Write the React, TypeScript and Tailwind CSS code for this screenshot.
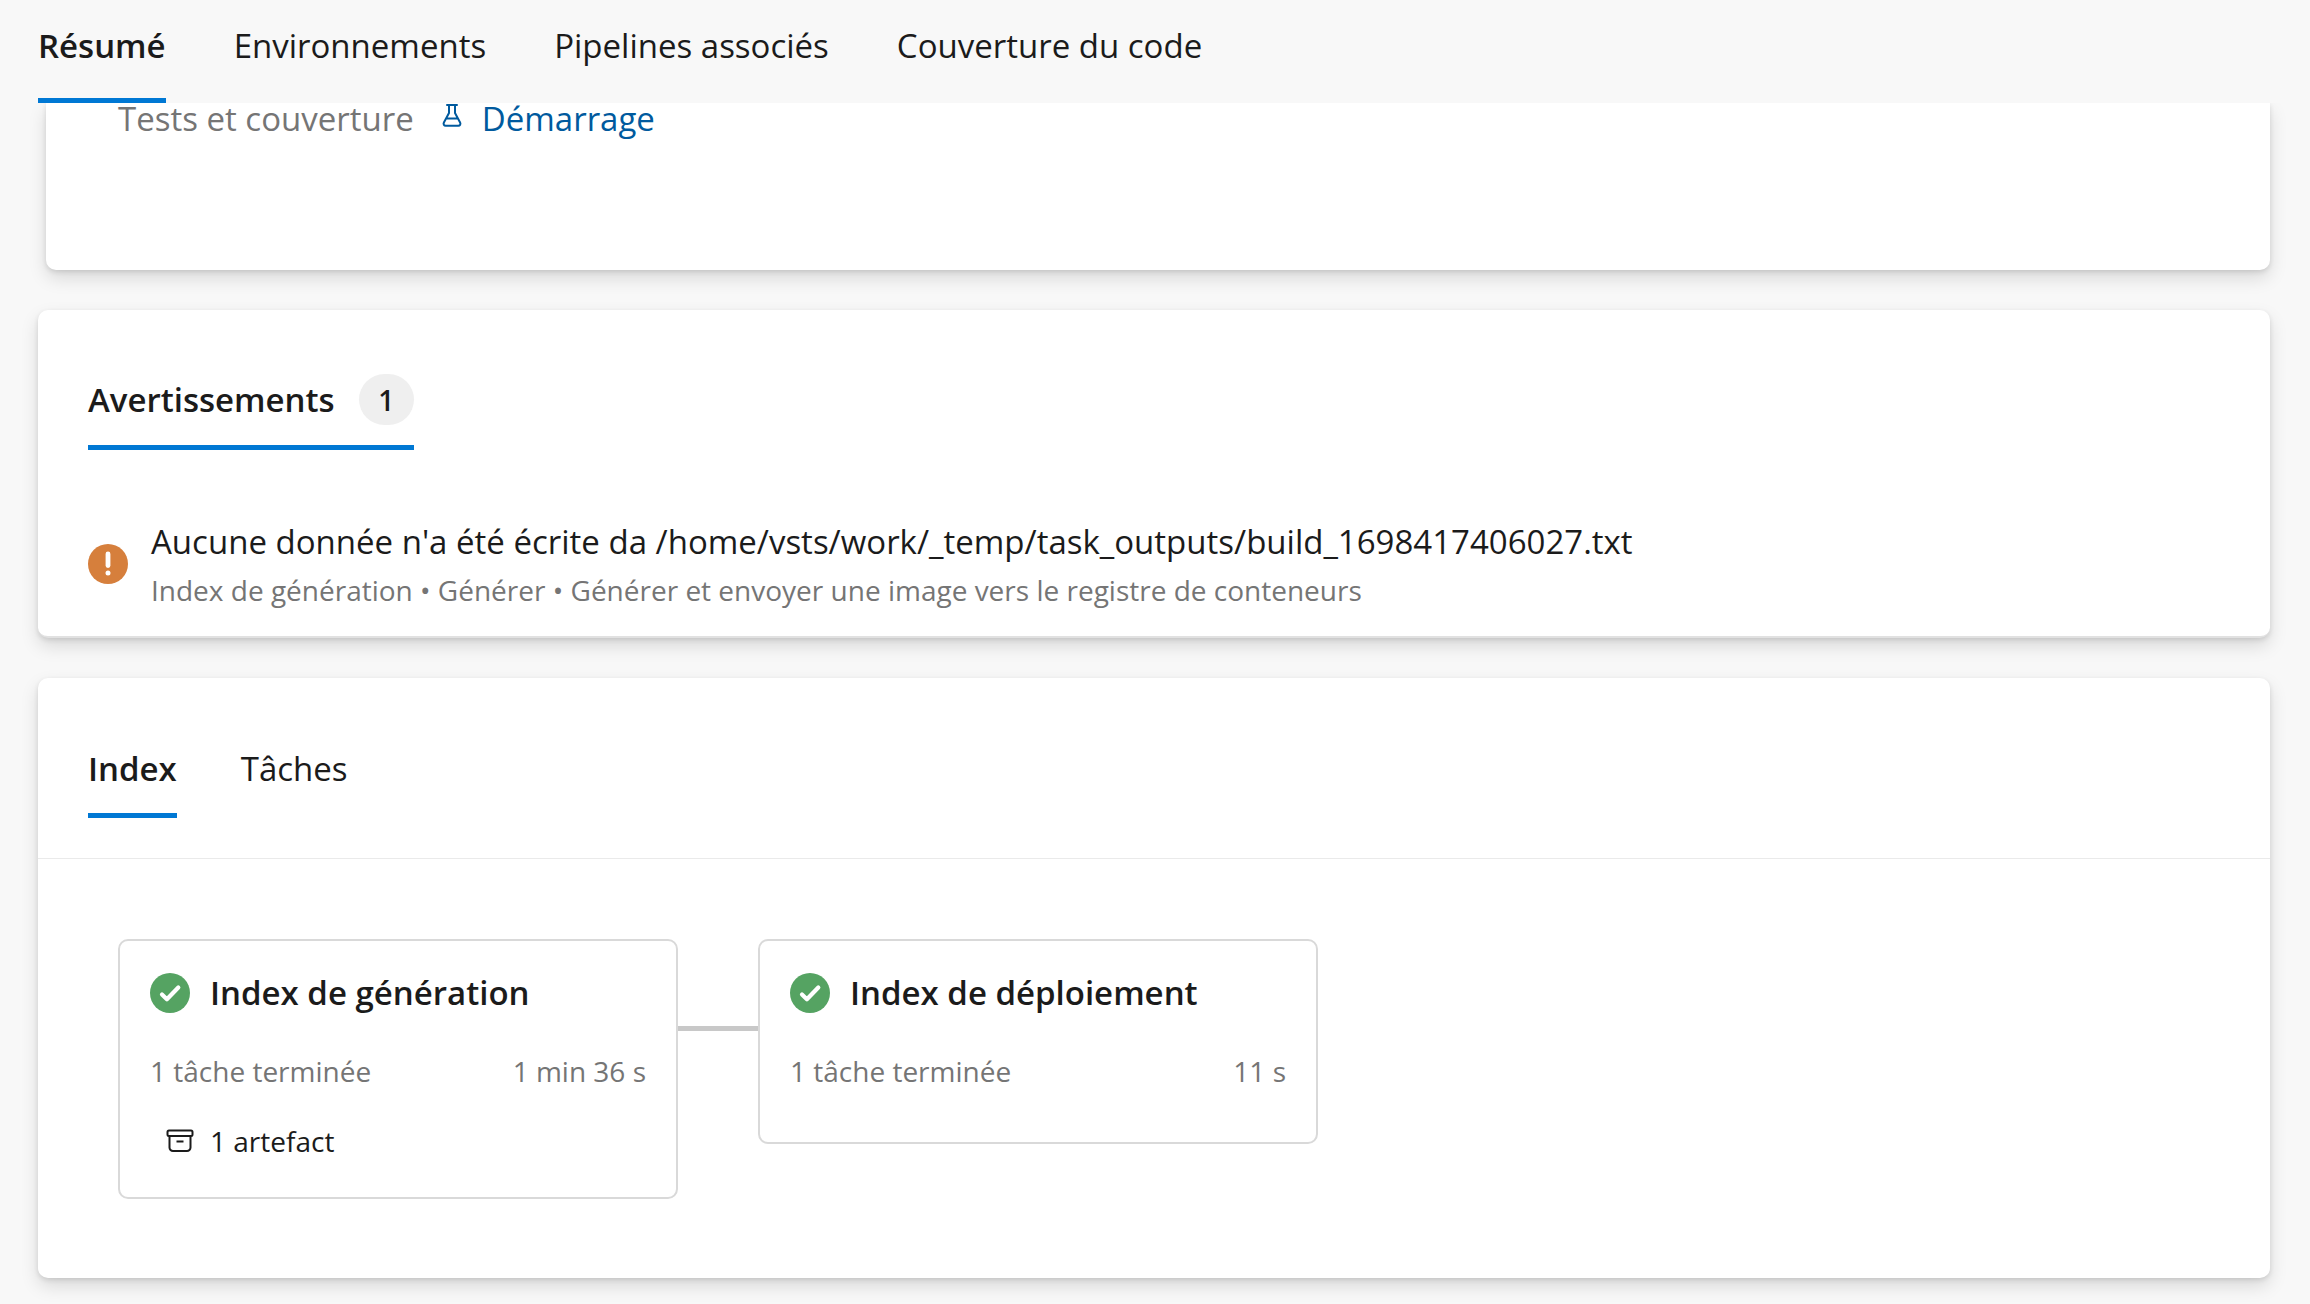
import React from 'react';
import clsx from 'clsx';

interface TabProps {
  label: string;
  active?: boolean;
  count?: number;
  className?: string;
}

const Tab: React.FC<TabProps> = ({ label, active, count, className = 'pb-5' }) => (
  <button
    role="tab"
    aria-selected={!!active}
    className={clsx(
      'flex items-center gap-6 border-b-[5px] text-[33px] leading-12 whitespace-nowrap',
      active ? 'border-[#0078d4] font-semibold' : 'border-transparent',
      className
    )}
  >
    {label}
    {count !== undefined && (
      <span className="flex h-[51px] w-[55px] items-center justify-center rounded-full bg-[#efefef] text-[28px]">
        {count}
      </span>
    )}
  </button>
);

const FlaskIcon = () => (
  <svg width="20" height="24" viewBox="0 0 20 24" fill="none" stroke="currentColor" strokeWidth="2" strokeLinejoin="round" strokeLinecap="round">
    <path d="M5 2h10M7 2v8L1.900 19.500c-.8 1.600 0 3.200 1.800 3.200h12.600c1.800 0 2.600-1.600 1.800-3.200L13 10V2M4.400 15.500h11.200" />
  </svg>
);

const ArchiveIcon = () => (
  <svg width="28" height="24" viewBox="0 0 28 24" fill="none" stroke="currentColor" strokeWidth="2">
    <rect x="1.500" y="1.500" width="25" height="5.500" rx="1.500" />
    <path d="M3.500 7v11.500a3.500 3.500 0 0 0 3.500 3.500h14a3.500 3.500 0 0 0 3.500-3.500V7M10.500 12.500h7" />
  </svg>
);

const SuccessIcon = () => (
  <svg width="40" height="40" viewBox="0 0 40 40" className="shrink-0">
    <circle cx="20" cy="20" r="20" fill="#55a362" />
    <path d="M12 21.500l4.900 4.800L28.300 14.500" fill="none" stroke="#fff" strokeWidth="4.200" strokeLinecap="round" strokeLinejoin="round" />
  </svg>
);

const WarningIcon = () => (
  <svg width="40" height="40" viewBox="0 0 40 40" className="shrink-0">
    <circle cx="20" cy="20" r="20" fill="#d67f3c" />
    <path d="M20 10v11.500" stroke="#fff" strokeWidth="4.800" strokeLinecap="round" />
    <circle cx="20" cy="29" r="2.500" fill="#fff" />
  </svg>
);

interface StageProps {
  name: string;
  jobs: string;
  duration: string;
  artifacts?: string;
}

const Stage: React.FC<StageProps> = ({ name, jobs, duration, artifacts }) => (
  <article className="min-h-[205px] w-[560px] rounded-[10px] border-2 border-[#d9d9d9] px-[30px] pt-7 pb-9">
    <h3 className="flex items-center gap-5 text-[33px] leading-12 font-semibold whitespace-nowrap">
      <SuccessIcon />
      {name}
    </h3>
    <div className="mt-[34px] flex justify-between text-[28px] leading-10 text-[#757575]">
      <span>{jobs}</span>
      <span>{duration}</span>
    </div>
    {artifacts && (
      <a href="#artefacts" className="mt-[30px] ml-4 flex items-center gap-4 text-[28px] leading-10">
        <ArchiveIcon />
        {artifacts}
      </a>
    )}
  </article>
);

const cardShadow = 'bg-white shadow-[0_8px_18px_rgba(0,0,0,0.13),0_2px_5px_rgba(0,0,0,0.11)]';

const App: React.FC = () => {
  return (
    <div className="min-h-screen bg-[#f8f8f8] font-['Open_Sans','Noto_Sans',sans-serif] text-[#1b1b1b]">
      <header className="sticky top-0 z-10 bg-[#f8f8f8] pt-[22px] pl-[38px]">
        <nav role="tablist" className="flex gap-[68px]">
          <Tab label="Résumé" active className="pb-7" />
          <Tab label="Environnements" className="pb-7" />
          <Tab label="Pipelines associés" className="pb-7" />
          <Tab label="Couverture du code" className="pb-7" />
        </nav>
      </header>

      <main className="flex flex-col gap-10 pr-10 pb-[26px] pl-[38px]">
        <section className={`ml-2 rounded-b-[10px] pb-[135px] pl-[72px] ${cardShadow}`}>
          <div className="flex items-center text-[33px] leading-8">
            <span className="text-[#757575]">Tests et couverture</span>
            <a href="#tests" className="ml-7 flex items-start gap-5 text-[#005a9e]">
              <FlaskIcon />
              Démarrage
            </a>
          </div>
        </section>

        <section className={`rounded-[10px] border-b-2 border-[#e1e1e1] px-[50px] pt-16 pb-[26px] ${cardShadow}`}>
          <div role="tablist" className="flex">
            <Tab label="Avertissements" count={1} active />
          </div>
          <div className="mt-[68px] flex items-center gap-[23px]">
            <WarningIcon />
            <div>
              <p className="text-[33px] leading-12">
                Aucune donnée n'a été écrite da /home/vsts/work/_temp/task_outputs/build_1698417406027.txt
              </p>
              <p className="mt-1 text-[28px] leading-10 text-[#757575]">
                Index de génération • Générer • Générer et envoyer une image vers le registre de conteneurs
              </p>
            </div>
          </div>
        </section>

        <section className={`rounded-[10px] ${cardShadow}`}>
          <div role="tablist" className="flex gap-16 border-b border-[#eaeaea] px-[50px] pt-[67px] pb-10">
            <Tab label="Index" active />
            <Tab label="Tâches" />
          </div>
          <div className="flex items-start px-20 pt-20 pb-[79px]">
            <Stage name="Index de génération" jobs="1 tâche terminée" duration="1 min 36 s" artifacts="1 artefact" />
            <div className="mt-[87px] h-[5px] w-20 bg-[#c8c8c8]" />
            <Stage name="Index de déploiement" jobs="1 tâche terminée" duration="11 s" />
          </div>
        </section>
      </main>
    </div>
  );
};

export default App;
